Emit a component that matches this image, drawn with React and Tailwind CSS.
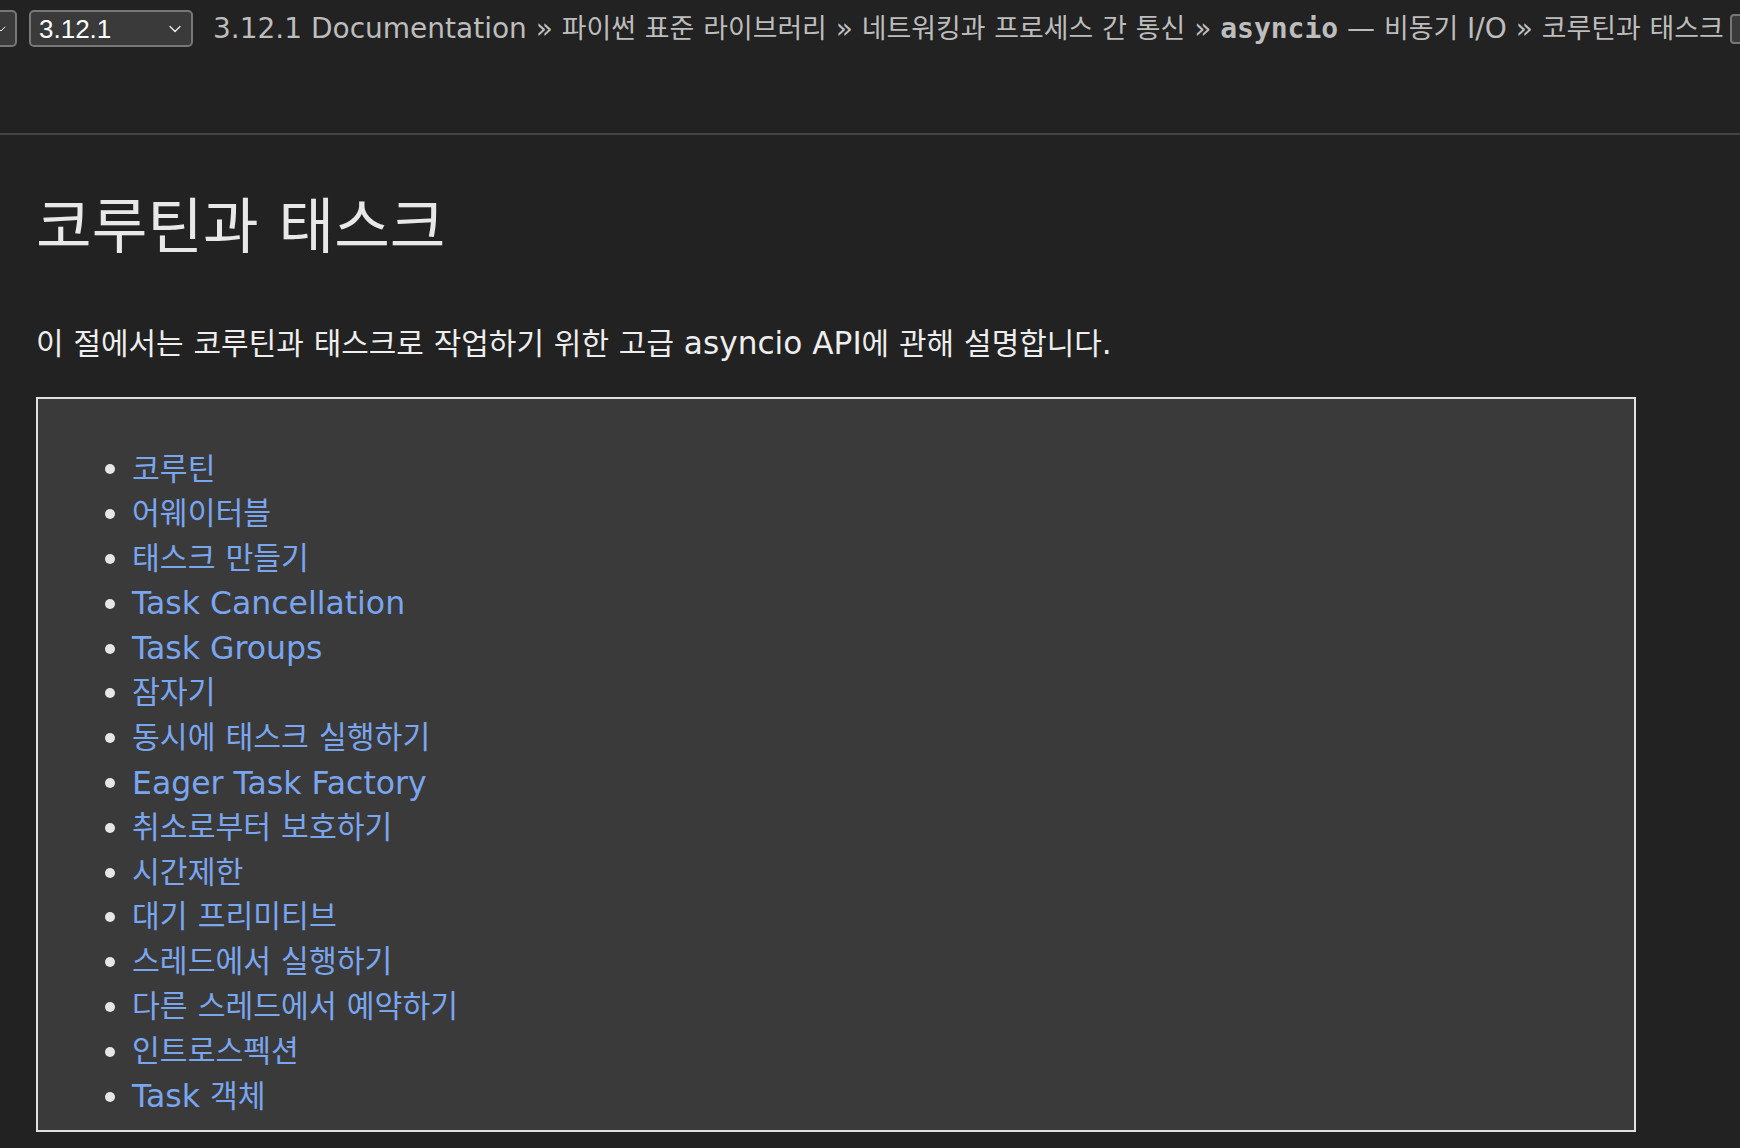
import { ChevronDown } from 'lucide-react'

// Wrap Hangul runs so the CJK fallback font sits at the reference size
function K({ text }) {
  const parts = text.split(/([\uAC00-\uD7A3]+)/)
  return parts.map((p, i) =>
    /[\uAC00-\uD7A3]/.test(p) ? (
      <span key={i} className="text-[0.96em]">
        {p}
      </span>
    ) : (
      p
    )
  )
}

const items = [
  '코루틴',
  '어웨이터블',
  '태스크 만들기',
  'Task Cancellation',
  'Task Groups',
  '잠자기',
  '동시에 태스크 실행하기',
  'Eager Task Factory',
  '취소로부터 보호하기',
  '시간제한',
  '대기 프리미티브',
  '스레드에서 실행하기',
  '다른 스레드에서 예약하기',
  '인트로스펙션',
  'Task 객체',
]

export default function App() {
  return (
    <div className="min-h-[1148px] bg-[#222222] font-['DejaVu_Sans','Noto_Sans_CJK_KR',sans-serif] overflow-hidden">
      {/* Top bar */}
      <div className="h-[135px] border-b-2 border-[#444444]">
        <div className="flex items-center pt-[10px] h-[47px] whitespace-nowrap">
          <div className="-ml-[44px] w-[61px] h-[37px] shrink-0 rounded-[5px] border-2 border-[#777777] bg-[#3a3a3a] flex items-center justify-end pr-[6px]">
            <ChevronDown className="w-[16px] h-[16px] text-[#eeeeee]" strokeWidth={1.5} />
          </div>
          <div className="ml-[12px] w-[164px] h-[37px] shrink-0 rounded-[5px] border-2 border-[#777777] bg-[#3a3a3a] flex items-center justify-between pl-[8px] pr-[6px]">
            <span className="font-['Liberation_Sans',sans-serif] text-[26px] text-white leading-none">3.12.1</span>
            <ChevronDown className="w-[20px] h-[20px] text-[#eeeeee]" strokeWidth={1.5} />
          </div>
          <div className="ml-[20px] text-[28px] text-[#bdbdbd] leading-none flex items-center">
            <span>
              <K text="3.12.1 Documentation » 파이썬 표준 라이브러리 » 네트워킹과 프로세스 간 통신 » " />
              <code className="font-['DejaVu_Sans_Mono',monospace] font-bold">asyncio</code>
              <K text=" — 비동기 I/O » 코루틴과 태스크" />
            </span>
            <span className="ml-[6px] inline-block w-[40px] h-[30px] rounded-[4px] border-2 border-[#777777] bg-[#3a3a3a]"></span>
          </div>
        </div>
      </div>

      {/* Content */}
      <div className="pl-[36px] pt-[50px]">
        <h1 className="text-[63px] leading-[84px] text-[#e8e8e8] font-normal">
          <K text="코루틴과 태스크" />
        </h1>
        <p className="mt-[53px] text-[31.2px] leading-[42px] text-[#eeeeee]">
          <K text="이 절에서는 코루틴과 태스크로 작업하기 위한 고급 asyncio API에 관해 설명합니다." />
        </p>

        <div className="mt-[32px] w-[1600px] border-2 border-[#e0e0e0] bg-[#3a3a3a] pl-[67px] pt-[48px] pb-[11px]">
          <ul className="flex flex-col">
            {items.map((it) => (
              <li key={it} className="flex items-center h-[44.8px] gap-[17px]">
                <span className="w-[10px] h-[10px] rounded-full bg-[#e6e6e6] shrink-0"></span>
                <a href="#" className="text-[31.5px] leading-[44.8px] text-[#7aa6f0] whitespace-nowrap">
                  <K text={it} />
                </a>
              </li>
            ))}
          </ul>
        </div>
      </div>
    </div>
  )
}
